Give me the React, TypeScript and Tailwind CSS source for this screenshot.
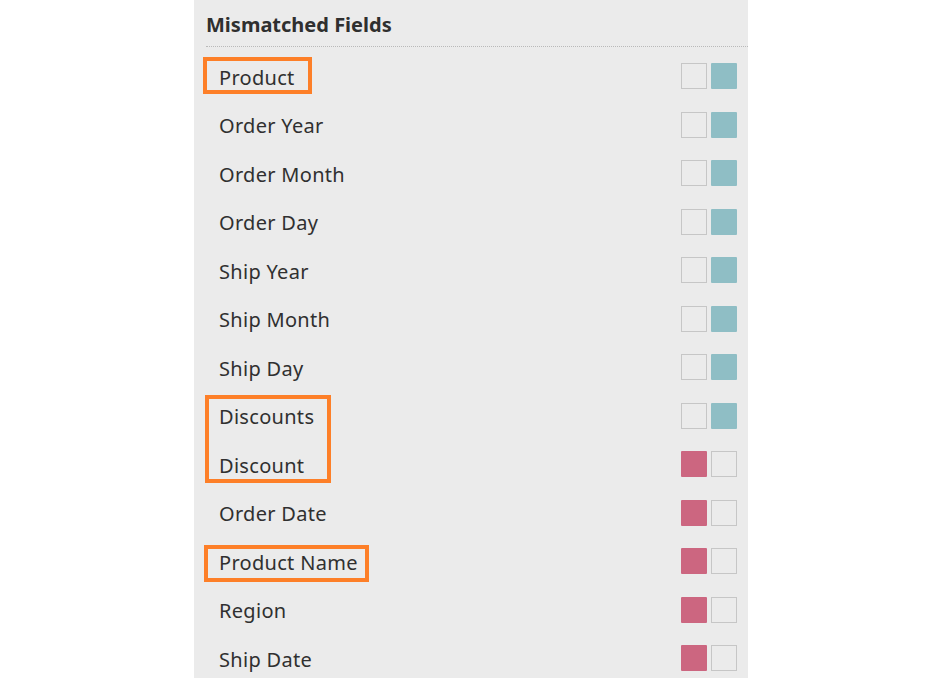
import React from 'react'

type Field = { name: string; side: 'left' | 'right'; box?: { left: number; width: number; top: number; height: number } }

const fields: Field[] = [
  { name: 'Product', side: 'right', box: { left: 9, width: 109, top: 5, height: 37 } },
  { name: 'Order Year', side: 'right' },
  { name: 'Order Month', side: 'right' },
  { name: 'Order Day', side: 'right' },
  { name: 'Ship Year', side: 'right' },
  { name: 'Ship Month', side: 'right' },
  { name: 'Ship Day', side: 'right' },
  { name: 'Discounts', side: 'right', box: { left: 11, width: 126, top: 3.5, height: 88 } },
  { name: 'Discount', side: 'left' },
  { name: 'Order Date', side: 'left' },
  { name: 'Product Name', side: 'left', box: { left: 10, width: 165, top: 8, height: 37 } },
  { name: 'Region', side: 'left' },
  { name: 'Ship Date', side: 'left' },
]

function Swatch({ filled, color }: { filled: boolean; color: string }) {
  if (filled) return <div className={`w-[26px] h-[26px] rounded-[1px] ${color}`} />
  return <div className="w-[26px] h-[26px] border border-[#c6c6c6]" />
}

export default function App() {
  return (
    <div className="w-full h-[678px] bg-white flex justify-center overflow-hidden">
      <div
        className="w-[554px] h-full bg-[#ebebeb] text-[#333]"
        style={{ fontFamily: '"Noto Sans", "Open Sans", sans-serif' }}
      >
        <div className="ml-3 h-[47px] border-b border-dotted border-[#b9b9b9] flex items-center pt-[4px]">
          <span className="text-[20px] font-bold text-[#2f2f2f]">Mismatched Fields</span>
        </div>
        <div className="pt-[5px]">
          {fields.map(f => (
            <div key={f.name} className="relative h-[48.5px] flex items-center pl-[25px] pr-[11px]">
              <span className="flex-1 pt-[3px] text-[20px] tracking-[0.3px] text-[#303030]">{f.name}</span>
              <div className="flex gap-[4px]">
                <Swatch filled={f.side === 'left'} color="bg-[#cc6680]" />
                <Swatch filled={f.side === 'right'} color="bg-[#8fbec5]" />
              </div>
              {f.box && (
                <div
                  className="absolute border-[4px] border-[#fd7f28] pointer-events-none"
                  style={{ left: f.box.left, width: f.box.width, top: f.box.top, height: f.box.height }}
                />
              )}
            </div>
          ))}
        </div>
      </div>
    </div>
  )
}
